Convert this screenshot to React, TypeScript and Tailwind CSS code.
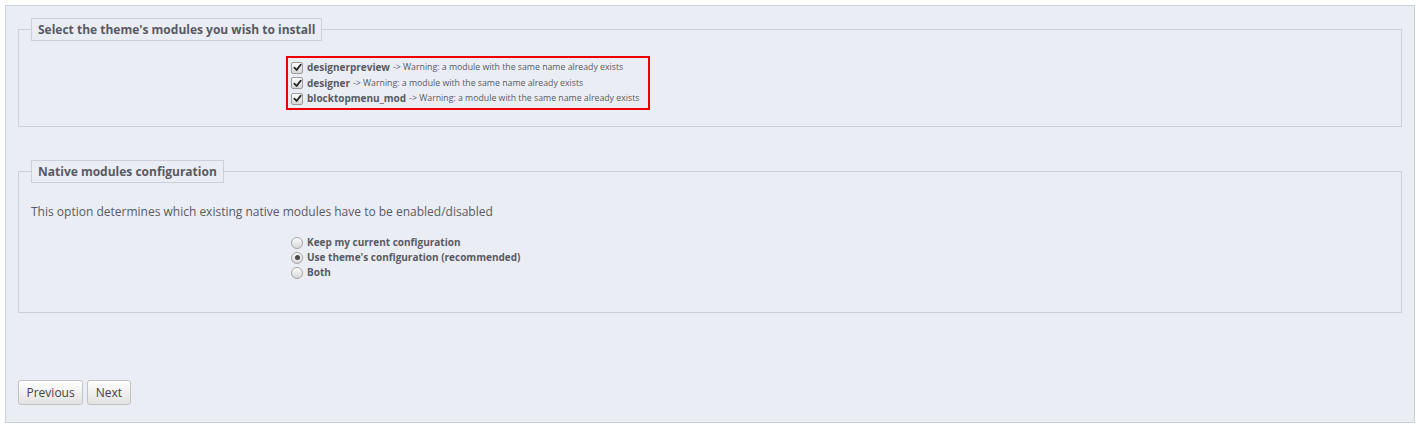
import React from 'react';

const modules = ['designerpreview', 'designer', 'blocktopmenu_mod'];

const nativeOptions = [
  { label: 'Keep my current configuration', checked: false },
  { label: "Use theme's configuration (recommended)", checked: true },
  { label: 'Both', checked: false },
];

function CheckBox() {
  return (
    <span className="inline-flex h-[12px] w-[12px] shrink-0 items-center justify-center rounded-[2px] border border-[#9a9a9a] bg-gradient-to-b from-[#fdfdfd] to-[#d6d6d6]">
      <svg viewBox="0 0 10 10" className="h-[9px] w-[9px]">
        <path d="M1.5 5.2 L4 7.8 L8.6 1.8" fill="none" stroke="#222" strokeWidth="1.9" strokeLinecap="round" strokeLinejoin="round" />
      </svg>
    </span>
  );
}

function Radio({ checked }: { checked: boolean }) {
  return (
    <span className="inline-flex h-[12px] w-[12px] shrink-0 items-center justify-center rounded-full border border-[#a5a5a5] bg-gradient-to-b from-[#fbfbfb] to-[#d9d9d9]">
      {checked && <span className="h-[5px] w-[5px] rounded-full bg-[#4a4a4a]" />}
    </span>
  );
}

export default function App() {
  return (
    <div className="min-h-[430px] bg-white pt-[5px] pl-[5px] pr-[8px] font-['Open_Sans',sans-serif] text-[#585a63]">
      <div className="border border-[#cdd0d8] bg-[#ebedf4] px-[12px] pt-[12px] pb-[17px]">
        <fieldset className="border border-[#cdd0d8] px-[12px] pt-[13px] pb-[16px]">
          <legend className="border border-[#cdd0d8] px-[6px] py-[2px] text-[12px] font-bold leading-[17px]">
            Select the theme's modules you wish to install
          </legend>
          <div className="ml-[255px] inline-flex flex-col border-2 border-[#ee0000] px-[3px] py-[2px]">
            {modules.map((name) => (
              <label key={name} className="flex h-[15.5px] items-center pr-[6px] whitespace-nowrap">
                <CheckBox />
                <span className="ml-[4px] text-[10px] font-bold leading-[15px]">{name}</span>
                <span className="ml-[3px] text-[8.75px] leading-[15px]">-&gt; Warning: a module with the same name already exists</span>
              </label>
            ))}
          </div>
        </fieldset>

        <fieldset className="mt-[33px] border border-[#cdd0d8] px-[12px] pt-[20px] pb-[32px]">
          <legend className="border border-[#cdd0d8] px-[6px] py-[2px] text-[12px] font-bold leading-[17px]">
            Native modules configuration
          </legend>
          <p className="text-[12px] leading-[17px]">
            This option determines which existing native modules have to be enabled/disabled
          </p>
          <div className="mt-[15px] ml-[260px] flex flex-col">
            {nativeOptions.map((opt) => (
              <label key={opt.label} className="flex h-[15px] items-center gap-[4px] whitespace-nowrap">
                <Radio checked={opt.checked} />
                <span className="text-[10px] font-bold leading-[15px]">{opt.label}</span>
              </label>
            ))}
          </div>
        </fieldset>

        <div className="mt-[67px] flex gap-[4px]">
          <button className="h-[25px] rounded-[3px] border border-[#c3c3c3] bg-gradient-to-b from-white to-[#e2e2e2] px-[7.5px] text-[12px] text-[#444] shadow-[inset_0_1px_0_#fff]">
            Previous
          </button>
          <button className="h-[25px] rounded-[3px] border border-[#c3c3c3] bg-gradient-to-b from-white to-[#e2e2e2] px-[7.5px] text-[12px] text-[#444] shadow-[inset_0_1px_0_#fff]">
            Next
          </button>
        </div>
      </div>
    </div>
  );
}
